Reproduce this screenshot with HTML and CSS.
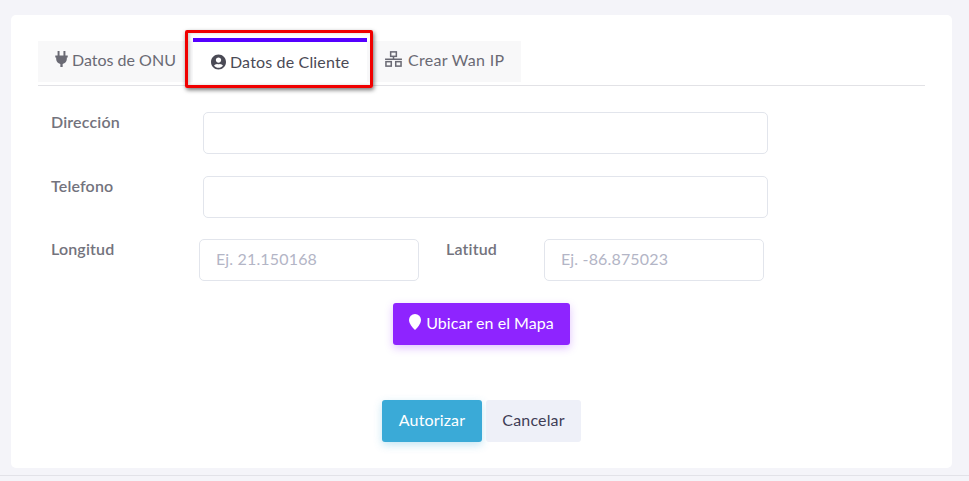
FILE: index.html
```html
<!DOCTYPE html>
<html lang="es">
<head>
<meta charset="utf-8">
<title>Datos de Cliente</title>
<link rel="stylesheet" href="styles.css">
</head>
<body>
<main class="card">
  <nav class="tabs">
    <a class="tab tab-first">
      <svg class="icon icon-plug" viewBox="0 0 14 18"><path d="M2.600 0h2.200v5H2.600zM9.200 0h2.200v5H9.200zM0 5h14v2.200h-1V9c0 3-2 5-4.700 5.500V18H5.700v-3.500C3 14 1 12 1 9V7.200H0z"/></svg>
      <span>Datos de ONU</span>
    </a>
    <a class="tab tab-active">
      <svg class="icon" viewBox="0 0 496 512"><path d="M248 8C111 8 0 119 0 256s111 248 248 248 248-111 248-248S385 8 248 8zm0 96c48.600 0 88 39.400 88 88s-39.400 88-88 88-88-39.400-88-88 39.400-88 88-88zm0 344c-58.700 0-111.300-26.600-146.500-68.200 18.800-35.400 55.600-59.800 98.500-59.800 2.400 0 4.800.4 7.100 1.100 13 4.200 26.600 6.900 40.900 6.900 14.300 0 28-2.700 40.900-6.900 2.300-.7 4.700-1.100 7.100-1.100 42.900 0 79.700 24.400 98.500 59.800C359.300 421.400 306.700 448 248 448z"/></svg>
      <span>Datos de Cliente</span>
    </a>
    <a class="tab tab-last">
      <svg class="icon icon-wide" viewBox="0 0 20 18" fill="none" stroke="currentColor" stroke-width="1.700"><rect x="6.800" y="1" width="6.400" height="5"/><rect x="1.500" y="12" width="6" height="5"/><rect x="12.500" y="12" width="6" height="5"/><path d="M10 6v3M.5 9.200h19"/></svg>
      <span>Crear Wan IP</span>
    </a>
  </nav>

  <form class="form">
    <div class="row">
      <label class="label label-main">Dirección</label>
      <input class="input input-full" type="text">
    </div>
    <div class="row">
      <label class="label label-main">Telefono</label>
      <input class="input input-full" type="text">
    </div>
    <div class="row row-coords">
      <label class="label label-coord">Longitud</label>
      <input class="input input-half" type="text" placeholder="Ej. 21.150168">
      <label class="label label-lat">Latitud</label>
      <input class="input input-half" type="text" placeholder="Ej. -86.875023">
    </div>
    <div class="map-row">
      <button class="btn btn-map" type="button">
        <svg class="pin" viewBox="0 0 12 16"><path d="M6 0a6 6 0 0 1 6 6c0 3.500-3.500 7.500-6 10C3.500 13.500 0 9.500 0 6a6 6 0 0 1 6-6z"/></svg>
        <span>Ubicar en el Mapa</span>
      </button>
    </div>
    <div class="actions">
      <button class="btn btn-ok" type="button">Autorizar</button>
      <button class="btn btn-cancel" type="button">Cancelar</button>
    </div>
  </form>
</main>
<footer class="foot"></footer>
</body>
</html>
```

FILE: styles.css
```css
* { box-sizing: border-box; }

html, body { height: 100%; }

body {
  margin: 0;
  background: #f4f4f9;
  font-family: "Lato", "Noto Sans", sans-serif;
  font-size: 16px;
  letter-spacing: .16px;
  color: #5c5c66;
  overflow: hidden;
}

.card {
  margin: 15px 17px 0 11px;
  height: 453px;
  padding: 23px 27px 0;
  background: #fff;
  border-radius: 5px;
}

.tabs {
  display: flex;
  align-items: flex-end;
  height: 48px;
  border-bottom: 1px solid #e2e2e6;
}

.tab {
  display: flex;
  align-items: center;
  gap: 4px;
  height: 41px;
  margin-bottom: 3px;
  padding: 0 17px 5px;
  background: #f8f8f9;
  color: #6a6a74;
  white-space: nowrap;
}

.tab-first { width: 155px; letter-spacing: 0; }
.tab-last { width: 154px; gap: 5px; letter-spacing: .32px; }

.tab-active {
  position: relative;
  width: 174px;
  height: 47px;
  margin-bottom: 0;
  padding: 0 18px 4px;
  background: #fff;
  border-top: 4px solid #5500ff;
  color: #4a4a55;
}

.tab-active::after {
  content: "";
  position: absolute;
  top: -12px;
  left: -8px;
  right: -6px;
  bottom: -3px;
  border: 3px solid #f00000;
  border-radius: 2px;
  box-shadow: 1px 2px 4px rgba(0, 0, 0, .55), inset 2px 0 3px rgba(0, 0, 0, .18);
  pointer-events: none;
}

.icon {
  width: 15px;
  height: 16px;
  fill: currentColor;
  flex: none;
}

.icon-plug { width: 13px; }

.icon-wide {
  width: 19px;
  fill: none;
}

.form { padding-top: 26px; }

.row {
  display: flex;
  align-items: flex-start;
  height: 42px;
  margin-bottom: 22px;
  padding-left: 13px;
}

.row-coords {
  margin-top: -1px;
}

.label {
  line-height: 20px;
  font-weight: 600;
  color: #73737d;
}

.label-main { width: 152px; }
.label-coord { width: 148px; }
.label-lat { width: 98px; margin-left: 27px; }

.input {
  height: 42px;
  padding: 0 16px 4px;
  background: #fff;
  border: 1px solid #e2e5ec;
  border-radius: 5px;
  font: inherit;
  letter-spacing: inherit;
  color: #5c5c66;
  outline: none;
}

.input::placeholder { color: #b3b5c6; opacity: 1; }

.input-full { width: 565px; }
.input-half { width: 220px; }

.map-row,
.actions {
  display: flex;
  justify-content: center;
}

.actions {
  gap: 4px;
  margin-top: 55px;
}

.btn {
  display: flex;
  align-items: center;
  justify-content: center;
  height: 42px;
  padding: 0 0 4px;
  border: 0;
  border-radius: 3px;
  font: inherit;
  letter-spacing: inherit;
}

.btn-map {
  gap: 5px;
  width: 177px;
  letter-spacing: .04px;
  background: #8e24ff;
  color: #fff;
  box-shadow: 0 3px 8px rgba(142, 36, 255, .28);
}

.pin {
  width: 12px;
  height: 16px;
  fill: #fff;
  flex: none;
}

.btn-ok {
  width: 100px;
  background: #3aaad7;
  color: #fff;
  box-shadow: 0 3px 8px rgba(58, 170, 215, .3);
}

.btn-cancel {
  width: 95px;
  background: #eef0f8;
  color: #3f3d56;
}

.foot {
  margin-top: 7px;
  height: 6px;
  border-top: 1px solid #e2e2e8;
}
```
